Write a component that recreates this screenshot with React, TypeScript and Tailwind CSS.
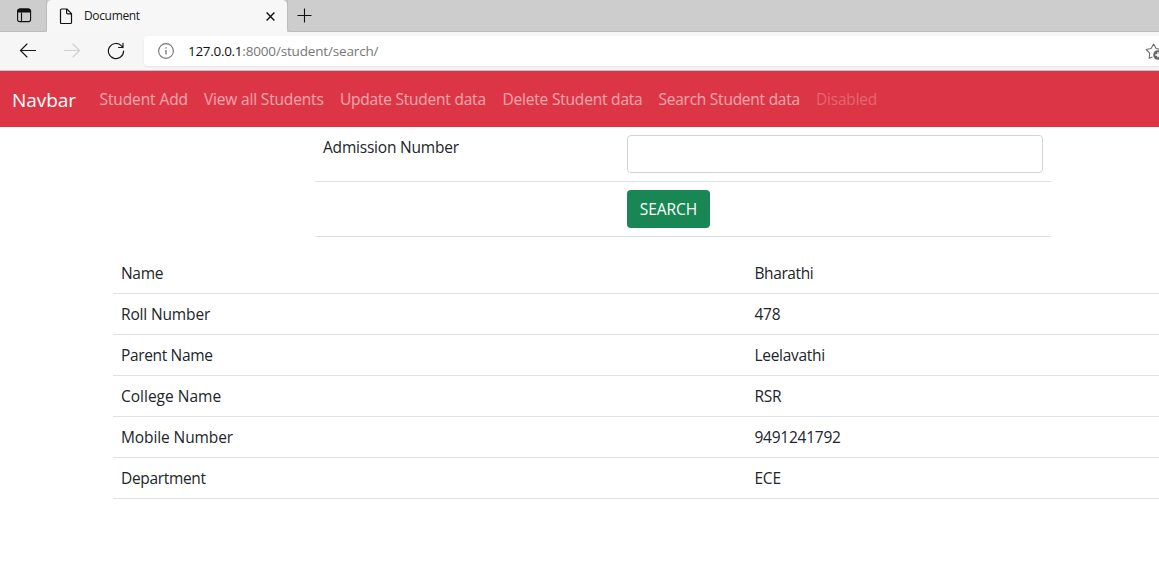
const navLinks = [
  { label: 'Student Add', box: 'w-[88.5px] tracking-[-0.1px]' },
  { label: 'View all Students', box: 'w-[120px] tracking-[-0.17px]' },
  { label: 'Update Student data', box: 'w-[146.5px] tracking-[-0.23px]' },
  { label: 'Delete Student data', box: 'w-[140px] tracking-[-0.2px]' },
  { label: 'Search Student data', box: 'w-[141.5px] tracking-[-0.25px]' },
];

const details = [
  ['Name', 'Bharathi', 'tracking-[-0.3px]', 'tracking-[-0.4px]'],
  ['Roll Number', '478', 'tracking-[-0.15px]', 'tracking-[-0.25px]'],
  ['Parent Name', 'Leelavathi', 'tracking-[-0.35px]', 'tracking-[-0.3px]'],
  ['College Name', 'RSR', 'tracking-[0px]', 'tracking-[-0.25px]'],
  ['Mobile Number', '9491241792', 'tracking-[-0.1px]', 'tracking-[-0.25px]'],
  ['Department', 'ECE', 'tracking-[-0.33px]', 'tracking-[-0.25px]'],
];

function TabStrip() {
  return (
    <div className="flex h-8 bg-[#cdcdcd]">
      <div className="flex w-[47px] items-center rounded-br-[4px] border-b border-r border-[#bcbcbc] pl-[17px]">
        <svg width="15" height="15" viewBox="0 0 15 15" fill="none" stroke="#111">
          <rect x="0.6" y="1" width="13" height="12.6" rx="2.2" strokeWidth="1.1" />
          <path d="M1 2.8Q1 1 3 1h8.3q2 0 2 1.8v1.2H1z" fill="#111" />
          <path d="M4.5 4.5v9" strokeWidth="1.1" />
        </svg>
      </div>
      <div className="flex w-[240px] items-center rounded-t-[5px] bg-[#f7f7f7] pl-3">
        <svg width="14" height="17" viewBox="0 0 14 17" fill="none" stroke="#111" strokeWidth="1.2" strokeLinejoin="round">
          <path d="M2.6 1h5.2l4.7 4.7v8.7q0 1.1-1.1 1.1H2.6q-1.1 0-1.1-1.1V2.1Q1.5 1 2.6 1z" />
          <path d="M7.6 1v3.8q0 1.1 1.1 1.1h3.8" />
        </svg>
        <span className="ml-[11px] w-[182px] whitespace-nowrap text-[12px] leading-4 tracking-[-0.35px] text-[#1b1b1b]">Document</span>
        <svg width="9" height="9" viewBox="0 0 9 9" fill="none" stroke="#111" strokeWidth="1.4" className="relative top-[0.5px]">
          <path d="M0.6 0.6l7.8 7.8M8.4 0.6L0.6 8.4" />
        </svg>
      </div>
      <div className="flex flex-1 items-center rounded-bl-[4px] border-b border-l border-[#bcbcbc] pl-[9px]">
        <svg width="15" height="15" viewBox="0 0 15 15" stroke="#111" strokeWidth="1.1">
          <path d="M7.5 0.5v14M0.5 7.5h14" />
        </svg>
      </div>
    </div>
  );
}

function AddressRow() {
  return (
    <div className="flex h-[39px] items-center border-b border-[#c6c6c6] bg-[#f6f6f6] pl-[19px]">
      <svg width="18" height="16" viewBox="0 0 18 16" fill="none" stroke="#1a1a1a" strokeWidth="1.15" strokeLinecap="round" strokeLinejoin="round">
        <path d="M16.5 7.5H1.5M8 1L1.5 7.5L8 14" />
      </svg>
      <svg width="18" height="16" viewBox="0 0 18 16" fill="none" stroke="#cfcfcf" strokeWidth="1.15" strokeLinecap="round" strokeLinejoin="round" className="ml-[26px]">
        <path d="M1.5 7.5h15M10 1L16.5 7.5L10 14" />
      </svg>
      <svg width="18" height="18" viewBox="0 0 18 18" fill="none" stroke="#1a1a1a" strokeWidth="1.2" strokeLinecap="round" strokeLinejoin="round" className="ml-[26px]">
        <path d="M16.6 9a7.6 7.6 0 1 1-2.1-5.2L16 5.5M16 1.3v4.2H11.6" />
      </svg>
      <div className="ml-[19px] flex h-[30px] flex-1 items-center rounded-l-[4px] bg-white pl-[14px] shadow-[0_1px_2px_rgba(0,0,0,0.08)]">
        <svg width="16" height="16" viewBox="0 0 16 16" fill="none" stroke="#767676" strokeWidth="1.1">
          <circle cx="8" cy="8" r="7.4" />
          <path d="M8 6.9v4.5M8 4.2v1.4" strokeWidth="1.3" />
        </svg>
        <span className="ml-[14px] flex-1 whitespace-nowrap text-[13.5px] leading-5 tracking-[-0.16px] text-[#777]">
          <span className="tracking-[-0.3px] text-[#111]">127.0.0.1</span>:8000/student/search/
        </span>
        <svg width="14" height="18" viewBox="0 0 14 18" fill="none" stroke="#6b6b6b" strokeWidth="1.1" strokeLinejoin="round">
          <path d="M7.5 15L4.2 16.2L4.7 11.2L1.2 7.5L6.1 6.5L8.6 2.1L11.1 6.5L14 7.1" />
          <circle cx="13" cy="13" r="4.8" fill="#666" stroke="none" />
          <path d="M10.3 13h5M13 10.3v5" stroke="#fff" strokeWidth="1.4" />
        </svg>
      </div>
    </div>
  );
}

function Navbar() {
  return (
    <nav className="flex h-14 items-center whitespace-nowrap bg-[#dc3545] pl-3">
      <a className="w-[64px] pt-0.5 text-[19px] leading-[30px] tracking-[-0.05px] text-white">Navbar</a>
      <div className="ml-[23.5px] flex gap-4 text-[15.5px] leading-6 text-white/55">
        {navLinks.map(({ label, box }) => (
          <a key={label} className={box}>{label}</a>
        ))}
        <a className="tracking-[-0.2px] text-white/25">Disabled</a>
      </div>
    </nav>
  );
}

export default function App() {
  return (
    <div className="h-[571px] w-[1159px] overflow-hidden bg-white font-['Open_Sans','Noto_Sans',sans-serif]">
      <TabStrip />
      <AddressRow />
      <Navbar />
      <main className="text-[15.5px] leading-6 tracking-[-0.2px] text-[#212529]">
        <form className="ml-[315px] w-[736px]">
          <div className="grid h-[55px] grid-cols-[304px_1fr] border-b border-[#dee2e6] p-2">
            <label>Admission Number</label>
            <input className="h-[38px] w-full rounded border border-[#ced4da] bg-white px-3" />
          </div>
          <div className="grid h-[55px] grid-cols-[304px_1fr] border-b border-[#dee2e6] p-2">
            <span />
            <button type="button" className="h-[38px] w-[83px] rounded bg-[#198754] text-white tracking-[-0.05px]">SEARCH</button>
          </div>
        </form>
        <div className="ml-[113px] mt-4 w-[1266px]">
          {details.map(([label, value, labelTracking, valueTracking]) => (
            <div key={label} className="grid h-[41px] grid-cols-2 border-b border-[#dee2e6]">
              <span className={`p-2 ${labelTracking}`}>{label}</span>
              <span className={`py-2 pl-[8.5px] ${valueTracking}`}>{value}</span>
            </div>
          ))}
        </div>
      </main>
    </div>
  );
}
